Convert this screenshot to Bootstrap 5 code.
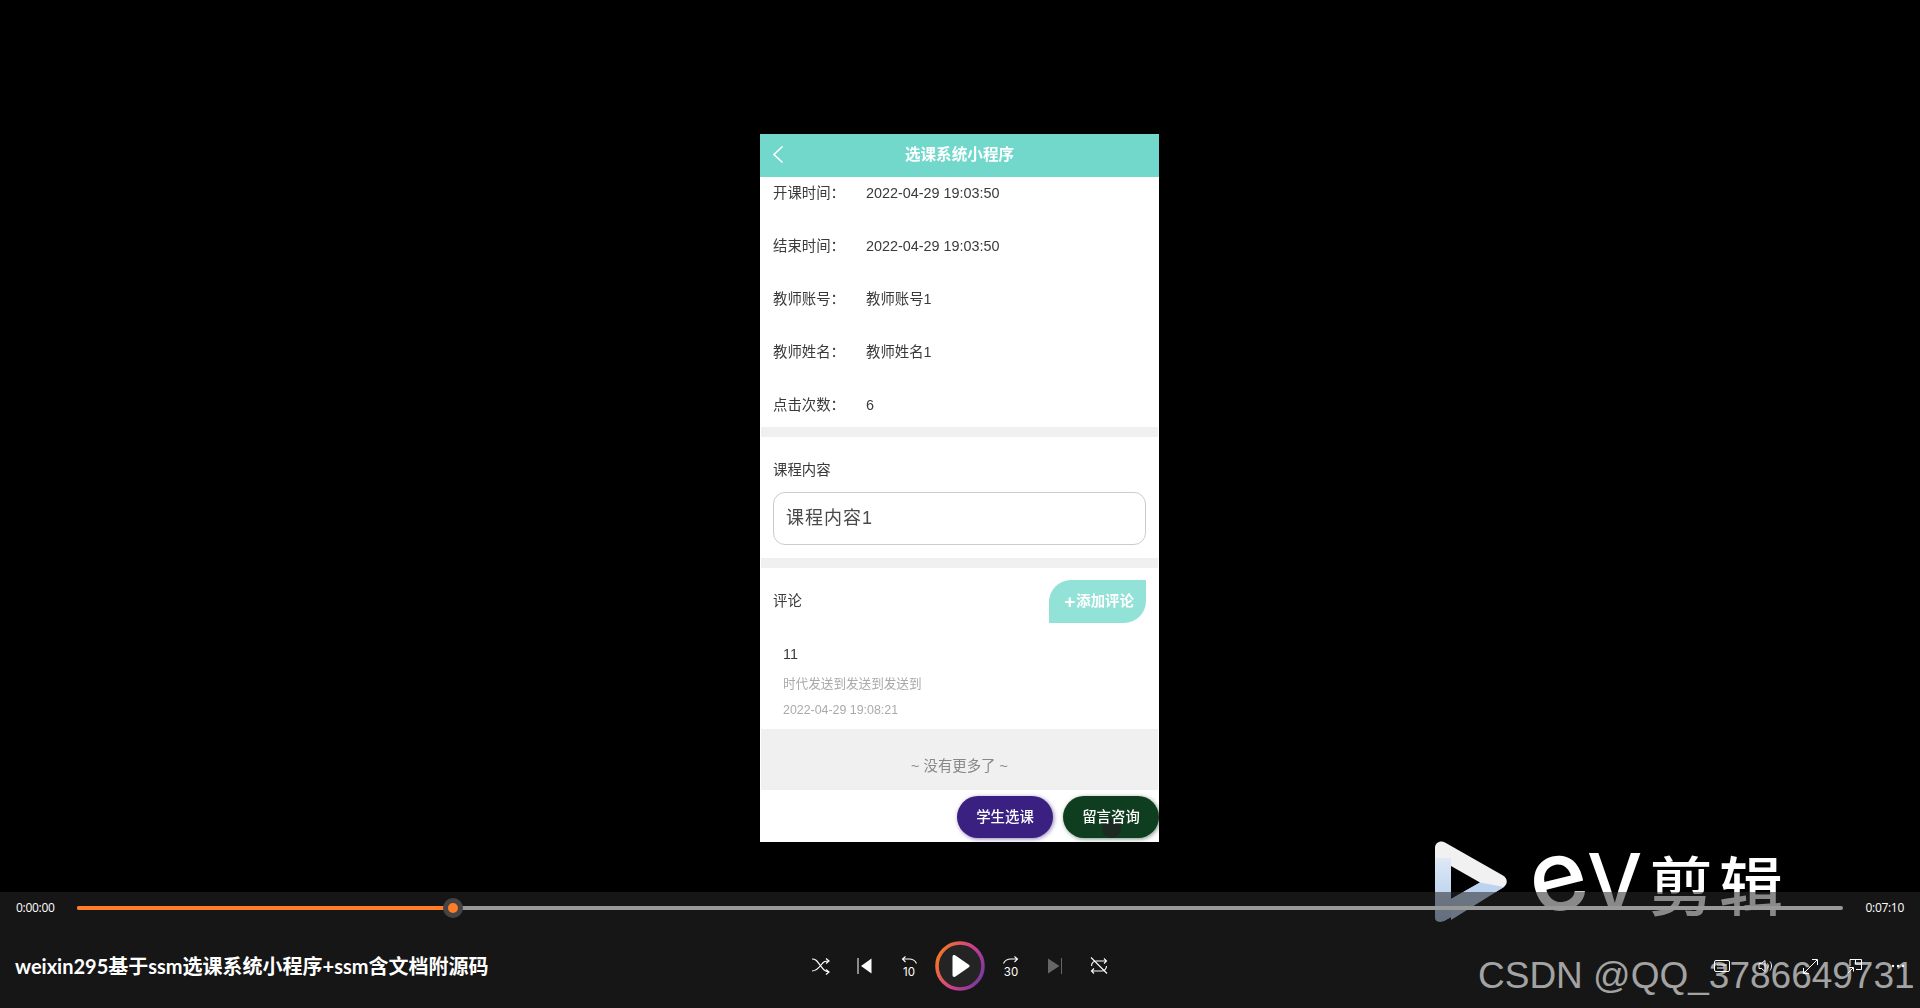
<!DOCTYPE html>
<html lang="zh-CN">
<head>
  <meta charset="UTF-8">
  <title>weixin295基于ssm选课系统小程序+ssm含文档附源码</title>
  <link rel="stylesheet" href="https://cdn.jsdelivr.net/npm/bootstrap@5.3.0/dist/css/bootstrap.min.css">
  <style>
    html, body { height: 100%; }
    body {
      background: #000;
      font-family: "Liberation Sans", "Noto Sans CJK SC", sans-serif;
      overflow: hidden;
    }
    .player { height: 1008px; position: relative; }
    .video-area { height: 892px; padding-top: 134px; }

    /* phone */
    .phone {
      width: 399px;
      height: 708px;
      margin-left: 760px;
      background: #fff;
      color: #3a3a3a;
      font-size: 14.4px;
      filter: blur(.35px);
    }
    .phone-head {
      height: 43px;
      background: #72d8cc;
      color: #fff;
      font-weight: 700;
      font-size: 15.6px;
      padding: 0 13px 2px;
      position: relative;
    }
    .phone-head svg { position: absolute; left: 12px; top: 11px; }
    .info-list { padding: 5px 13px 11px; gap: 31px; }
    .info-row { line-height: 22px; height: 22px; }
    .info-key { width: 93px; }
    .grey-gap { height: 10px; background: #f0f0f0; margin: 0 1px; }
    .content-sec { padding: 22px 13px 13px; }
    .content-sec .sec-title { line-height: 22px; margin-bottom: 11px; }
    .content-box {
      height: 53px;
      border: 1px solid #ccc;
      border-radius: 12px;
      padding-left: 12px;
      font-size: 18px;
      letter-spacing: 1px;
      color: #4a4a4a;
    }
    .comment-sec { padding: 12px 13px 0; height: 161px; }
    .add-btn {
      width: 97px;
      height: 43px;
      background: #93e2d8;
      color: #fff;
      font-weight: 700;
      font-size: 14.4px;
      border-radius: 22px 0 22px 0;
      padding-left: 3px;
    }
    .add-plus { font-size: 19px; line-height: 1; margin-right: 1px; }
    .comment-item { padding: 21px 0 0 10px; }
    .cm-name { line-height: 20px; font-size: 14.4px; }
    .cm-text { line-height: 20px; margin-top: 10px; font-size: 12.6px; color: #aaa; }
    .cm-time { line-height: 20px; margin-top: 6px; font-size: 12.4px; color: #aaa; }
    .no-more { height: 61px; background: #f0f0f0; color: #888; margin: 0 1px; font-size: 14.4px; padding-top: 14px; }
    .bottom-acts { height: 52px; padding-top: 6px; gap: 10px; }
    .act-btn {
      width: 96px;
      height: 42px;
      padding: 1px 0 0;
      color: #fff;
      font-size: 14.4px;
      font-weight: 500;
      border: 0;
      border-radius: 21px;
      position: relative;
    }
    .act-label { position: relative; z-index: 1; }
    .act-purple { background: #3a2080; box-shadow: 1px 1px 4px rgba(58,32,128,.55); }
    .act-green { background: #0f3d1f; box-shadow: 1px 1px 4px rgba(15,61,31,.55); }
    .act-green:hover, .act-purple:hover { color: #fff; }
    .cursor-dot {
      position: absolute;
      left: 39px;
      top: 23px;
      width: 19px;
      height: 19px;
      border-radius: 50%;
      background: #1c2a22;
    }

    /* ev watermark, sits under the translucent bar */
    .ev-logo { position: absolute; left: 1433px; top: 840px; color: #fff; }
    .ev-word {
      position: absolute;
      left: 1528px;
      top: 825px;
      color: #fff;
      white-space: nowrap;
      line-height: 100px;
      display: flex;
      align-items: baseline;
    }
    .ev-e { font-family: "Inter", sans-serif; font-weight: 500; font-size: 98px; display: inline-block; transform: rotate(-14deg); width: 60px; }
    .ev-v { font-family: "Inter", sans-serif; font-weight: 500; font-size: 78px; display: inline-block; width: 62px; margin-left: -1px; }
    .ev-cjk { font-family: "Noto Sans CJK SC", sans-serif; font-weight: 500; font-size: 64px; letter-spacing: 6px; }

    /* bottom bar */
    .ctrl-bar {
      position: absolute;
      left: 0;
      right: 0;
      top: 892px;
      height: 116px;
      background: rgba(40,40,40,.55);
      color: #fff;
    }
    .time-row { height: 32px; padding: 0 16px; font-size: 12px; font-family: "Open Sans", sans-serif; letter-spacing: -.3px; }
    .time-txt { width: 61px; }
    .time-end { width: 61px; text-align: right; }
    .seek { height: 4px; flex: 1 1 0; background: #999; border-radius: 2px; position: relative; }
    .seek-done { height: 100%; background: #ff7d29; border-radius: 2px; }
    .seek-knob {
      position: absolute;
      top: -8px;
      width: 20px;
      height: 20px;
      margin-left: -10px;
      border-radius: 50%;
      background: #ff7d29;
      border: 5px solid #444;
    }
    .ctrl-row { height: 60px; margin-top: 12px; position: relative; }
    .ctrl-side { flex: 1 1 0; min-width: 0; }
    .video-name { margin-left: 15px; font-size: 20px; font-weight: 700; font-family: "Lato", "Noto Sans CJK SC", sans-serif; white-space: nowrap; }
    .ico-box { width: 44px; height: 44px; position: relative; z-index: 2; }
    .ico-play { width: 58px; height: 58px; position: relative; z-index: 2; }
    .csdn-mark {
      position: absolute;
      left: 1478px;
      top: 61px;
      font-size: 37px;
      line-height: 46px;
      color: #a3a3a3;
      white-space: nowrap;
    }
  </style>
</head>
<body>

<div class="player">
  <div class="video-area">
    <div class="phone d-flex flex-column overflow-hidden">
      <div class="phone-head d-flex align-items-center justify-content-center">
        <svg width="12" height="19" viewBox="0 0 12 19" fill="none" stroke="#fff" stroke-width="1.6"><path d="M10.5 1.5 2 9.5l8.500 8"/></svg>
        选课系统小程序
      </div>
      <div class="info-list d-flex flex-column">
        <div class="info-row d-flex"><div class="info-key">开课时间：</div><div>2022-04-29 19:03:50</div></div>
        <div class="info-row d-flex"><div class="info-key">结束时间：</div><div>2022-04-29 19:03:50</div></div>
        <div class="info-row d-flex"><div class="info-key">教师账号：</div><div>教师账号1</div></div>
        <div class="info-row d-flex"><div class="info-key">教师姓名：</div><div>教师姓名1</div></div>
        <div class="info-row d-flex"><div class="info-key">点击次数：</div><div>6</div></div>
      </div>
      <div class="grey-gap"></div>
      <div class="content-sec">
        <div class="sec-title">课程内容</div>
        <div class="content-box d-flex align-items-center">课程内容1</div>
      </div>
      <div class="grey-gap"></div>
      <div class="comment-sec">
        <div class="d-flex justify-content-between align-items-center">
          <div>评论</div>
          <div class="add-btn d-flex align-items-center justify-content-center"><span class="add-plus">+</span>添加评论</div>
        </div>
        <div class="comment-item">
          <div class="cm-name">11</div>
          <div class="cm-text">时代发送到发送到发送到</div>
          <div class="cm-time">2022-04-29 19:08:21</div>
        </div>
      </div>
      <div class="no-more d-flex align-items-center justify-content-center">~ 没有更多了 ~</div>
      <div class="bottom-acts d-flex justify-content-end align-items-start">
        <button type="button" class="btn act-btn act-purple">学生选课</button>
        <button type="button" class="btn act-btn act-green"><span class="act-label">留言咨询</span><span class="cursor-dot"></span></button>
      </div>
    </div>
  </div>

  <svg class="ev-logo" width="76" height="84" viewBox="0 0 76 84">
    <defs>
      <linearGradient id="evBlue" x1="0" y1="0" x2="0" y2="1"><stop offset="0" stop-color="#dfe9f6"/><stop offset="1" stop-color="#a9c6ea"/></linearGradient>
    </defs>
    <path d="M2 8c0-6 6-8 10-5.500l58 33c5 3 5 9 0 12l-58 33c-4 2.500-10 .5-10-5.500z" fill="#f1f1f1"/>
    <path d="M2 18v60c0 4 5 5 10 2l6-3V18z" fill="url(#evBlue)"/>
    <path d="M18 26v33l29-16.500z" fill="#000"/>
    <path d="M18 59l29-16.500 24 4.500-53 33z" fill="#bcd2ee"/>
  </svg>
  <div class="ev-word"><span class="ev-e">e</span><span class="ev-v">V</span><span class="ev-cjk">剪辑</span></div>

  <div class="ctrl-bar">
    <div class="time-row d-flex align-items-center">
      <div class="time-txt">0:00:00</div>
      <div class="seek">
        <div class="seek-done" style="width: 21.3%"></div>
        <div class="seek-knob" style="left: 21.3%"></div>
      </div>
      <div class="time-end">0:07:10</div>
    </div>
    <div class="csdn-mark">CSDN @QQ_3786649731</div>
    <div class="ctrl-row d-flex align-items-center">
      <div class="ctrl-side"><div class="video-name">weixin295基于ssm选课系统小程序+ssm含文档附源码</div></div>
      <div class="d-flex align-items-center">
        <div class="ico-box d-flex align-items-center justify-content-center">
          <svg width="18" height="17" viewBox="0 0 18 17" fill="none" stroke="#fff" stroke-width="1.2"><path d="M0 1c4 0 5 2 8 6s4 6 9 7M0 13c4 0 6-2 9-6s4-4 8-4"/><path d="M14 .5l3 2.500-3 2.500M14 11.500l3 2.500-3 2.500"/></svg>
        </div>
        <div class="ico-box d-flex align-items-center justify-content-center">
          <svg width="16" height="16" viewBox="0 0 16 16"><path d="M.5 0h1v16h-1z" fill="#fff"/><path d="M14.500 .5v15L4 8z" fill="#fff"/></svg>
        </div>
        <div class="ico-box d-flex align-items-center justify-content-center">
          <svg width="22" height="28" viewBox="-2 -4 22 28" fill="none" stroke="#fff" stroke-width="1.1"><path d="M16.500 7.500C15 4 12 3 9 3H2.500M5.500 .5 2.500 3l3 3"/><text x="9" y="19.500" text-anchor="middle" fill="#fff" stroke="none" font-family="Inter, sans-serif" font-size="11.500">10</text></svg>
        </div>
        <div class="ico-play d-flex align-items-center justify-content-center">
          <svg width="50" height="50" viewBox="0 0 50 50">
            <defs>
              <linearGradient id="ringG" x1="0" y1="0.2" x2="1" y2="0.7"><stop offset="0" stop-color="#f47a1f"/><stop offset=".55" stop-color="#d0408a"/><stop offset="1" stop-color="#7a3a9e"/></linearGradient>
            </defs>
            <circle cx="25" cy="25" r="23" fill="#242424" stroke="url(#ringG)" stroke-width="3.6"/>
            <path d="M17.500 16c0-2 1.500-2.500 3-1.500l13 9c1.500 1 1.500 2 0 3l-13 9c-1.500 1-3 .5-3-1.500z" fill="#fff"/>
          </svg>
        </div>
        <div class="ico-box d-flex align-items-center justify-content-center">
          <svg width="22" height="28" viewBox="-2 -4 22 28" fill="none" stroke="#fff" stroke-width="1.1"><path d="M1.500 7.500C3 4 6 3 9 3h6.500M12.500 .5l3 2.500-3 3"/><text x="9" y="19.500" text-anchor="middle" fill="#fff" stroke="none" font-family="Inter, sans-serif" font-size="11.500">30</text></svg>
        </div>
        <div class="ico-box d-flex align-items-center justify-content-center">
          <svg width="16" height="16" viewBox="0 0 16 16"><path d="M1 .5v15L12.500 8z" fill="#666"/><path d="M14 0h1v16h-1z" fill="#666"/></svg>
        </div>
        <div class="ico-box d-flex align-items-center justify-content-center">
          <svg width="18" height="18" viewBox="0 0 18 18" fill="none" stroke="#fff" stroke-width="1.1"><path d="M1.500 9c0-3 2-5 5-5h10M14 1.500 16.500 4 14 6.500M16.500 9c0 3-2 5-5 5h-10M4 11.500 1.500 14 4 16.500M1 .5l16 16"/></svg>
        </div>
      </div>
      <div class="ctrl-side d-flex justify-content-end">
        <div class="ico-box d-flex align-items-center justify-content-center">
          <svg width="16" height="13" viewBox="0 0 16 13" fill="none" stroke="#fff" stroke-width="1"><rect x=".5" y=".5" width="15" height="11" rx="1.500"/><path d="M3 5h10M3 8h7"/></svg>
        </div>
        <div class="ico-box d-flex align-items-center justify-content-center">
          <svg width="16" height="14" viewBox="0 0 16 14" fill="none" stroke="#fff" stroke-width="1"><path d="M1 4.500h2.500L7 1.500v11l-3.500-3H1zM9.500 4.500c1 1.500 1 3.500 0 5M12 2.500c2 2.500 2 6.500 0 9"/></svg>
        </div>
        <div class="ico-box d-flex align-items-center justify-content-center">
          <svg width="15" height="15" viewBox="0 0 15 15" fill="none" stroke="#fff" stroke-width="1"><path d="M1 14 14 1M9 .5h5.500V6M.5 9v5.500H6"/></svg>
        </div>
        <div class="ico-box d-flex align-items-center justify-content-center">
          <svg width="15" height="15" viewBox="0 0 15 15" fill="none" stroke="#fff" stroke-width="1"><path d="M3 7V.5h11.500v10H9M8.500 .5V5h6M1 14l5-5M2.500 8.500H6.500V12.500"/></svg>
        </div>
        <div class="ico-box d-flex align-items-center justify-content-center">
          <svg width="14" height="4" viewBox="0 0 14 4" fill="#fff"><circle cx="2" cy="2" r="1.200"/><circle cx="7" cy="2" r="1.200"/><circle cx="12" cy="2" r="1.200"/></svg>
        </div>
      </div>
    </div>
  </div>
</div>

</body>
</html>
